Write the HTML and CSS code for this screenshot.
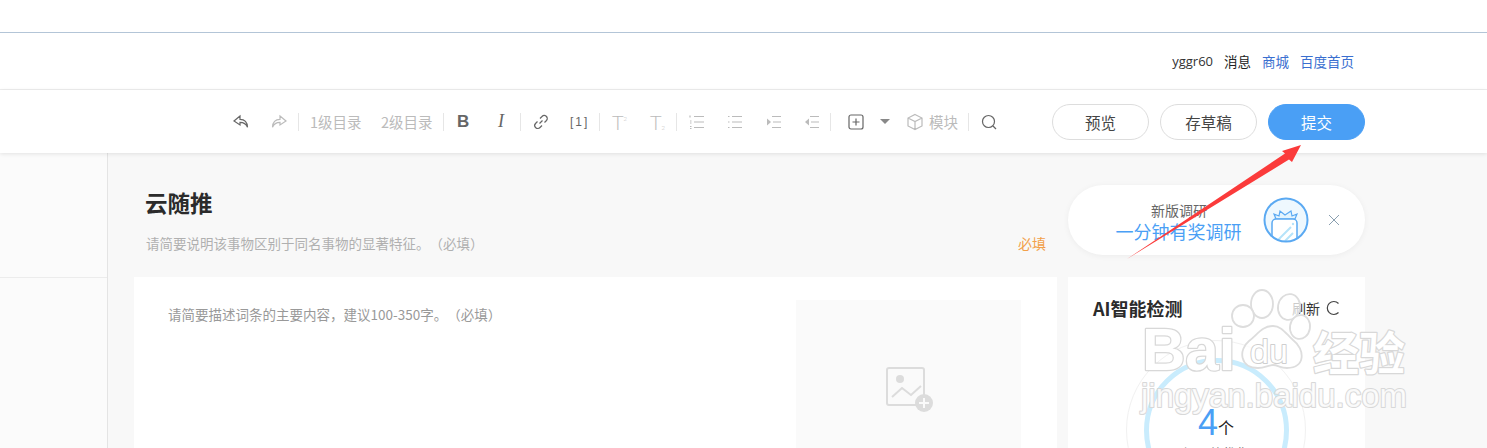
FILE: index.html
```html
<!DOCTYPE html>
<html lang="zh-CN">
<head>
    <meta charset="UTF-8">
    <title>云随推</title>
    <link rel="stylesheet" href="styles.css">
</head>
<body>
    <div class="topstrip"></div>

    <!-- Header -->
    <div class="userbar">
        <span class="user">yggr60</span>
        <span class="msg">消息</span>
        <a class="link">商城</a>
        <a class="link">百度首页</a>
    </div>

    <!-- Toolbar -->
    <div class="toolbar">
        <div class="tools">
            <svg class="ico ico-undo" viewBox="0 0 18 18"><path d="M8 3 2 8l6 4V9.300c3.500 0 6 1.200 7.500 5-.2-5-3-8-7.500-8z"/></svg>
            <svg class="ico ico-redo off" viewBox="0 0 18 18"><path d="M10 3l6 5-6 4V9.300c-3.500 0-6 1.200-7.500 5 .2-5 3-8 7.500-8z"/></svg>
            <i class="sep sep-a"></i>
            <span class="tool-text t1">1级目录</span>
            <span class="tool-text t2">2级目录</span>
            <i class="sep sep-b"></i>
            <span class="bold">B</span>
            <span class="ital">I</span>
            <i class="sep sep-c"></i>
            <svg class="ico ico-link" viewBox="0 0 18 18"><path d="M7.500 10.500 10.500 7.500M8 5.500l2-2a2.800 2.800 0 0 1 4.500 4l-2 2M10 12.500l-2 2a2.800 2.800 0 0 1-4.500-4l2-2"/></svg>
            <span class="ref">[1]</span>
            <i class="sep sep-d"></i>
            <span class="tee t-sup">T<small>2</small></span>
            <span class="tee t-sub">T<small>2</small></span>
            <i class="sep sep-e"></i>
            <svg class="ico ico-ol off" viewBox="0 0 18 18"><path d="M6 3.500h10M6 9h10M6 14.500h10M2 2.500v2M2 8h1.500M2 10h1.500M2 13.500h1.500M2 15.500h1.500"/></svg>
            <svg class="ico ico-ul off" viewBox="0 0 18 18"><path d="M6 3.500h10M6 9h10M6 14.500h10M2 3.500h1.500M2 9h1.500M2 14.500h1.500"/></svg>
            <svg class="ico ico-in off" viewBox="0 0 18 18"><path d="M7 3.500h9M8 9h8M7 14.500h9"/><path class="fill" d="M2 5.500 6 9l-4 3.500z"/></svg>
            <svg class="ico ico-out off" viewBox="0 0 18 18"><path d="M7 3.500h9M8 9h8M7 14.500h9"/><path class="fill" d="M6 5.500 2 9l4 3.500z"/></svg>
            <i class="sep sep-f"></i>
            <svg class="ico ico-add" viewBox="0 0 18 18"><rect x="2" y="2" width="14" height="14" rx="2"/><path d="M9 5.500v7M5.500 9h7"/></svg>
            <i class="caret"></i>
            <svg class="ico ico-cube off" viewBox="0 0 18 18"><path d="M9 1.500 16 5v8l-7 3.500L2 13V5zM2 5l7 3.500L16 5M9 8.500v8"/></svg>
            <span class="tool-text t3">模块</span>
            <i class="sep sep-g"></i>
            <svg class="ico ico-search" viewBox="0 0 18 18"><circle cx="8.500" cy="8.500" r="6"/><path d="m13 13 3 3"/></svg>
        </div>
        <div class="actions">
            <button class="btn">预览</button>
            <button class="btn">存草稿</button>
            <button class="btn primary">提交</button>
        </div>
    </div>

    <!-- Body -->
    <div class="page">
        <div class="sidebar"><div class="side-top"></div></div>
        <div class="content">
            <div class="col-main">
                <div class="heading">
                    <h1 class="title">云随推</h1>
                    <div class="sub-row">
                        <span class="subtitle">请简要说明该事物区别于同名事物的显著特征。（必填）</span>
                        <span class="required">必填</span>
                    </div>
                </div>
                <div class="editor">
                    <p class="hint">请简要描述词条的主要内容，建议100-350字。（必填）</p>
                    <div class="pic">
                        <svg class="pic-ico" viewBox="0 0 48 46">
                            <rect x="2" y="2" width="37" height="37" rx="2" fill="none" stroke="#dcdcdc" stroke-width="2"/>
                            <circle cx="15" cy="13" r="4" fill="#dcdcdc"/>
                            <path d="M7 31l10-9 9 7 10-9" fill="none" stroke="#dcdcdc" stroke-width="2"/>
                            <circle cx="39" cy="37" r="9" fill="#dcdcdc"/>
                            <path d="M39 32v10M34 37h10" stroke="#fafafa" stroke-width="2"/>
                        </svg>
                    </div>
                </div>
            </div>
            <div class="col-side">
                <div class="survey">
                    <div class="survey-text">
                        <span class="survey-small">新版调研</span>
                        <span class="survey-big">一分钟有奖调研</span>
                    </div>
                    <svg class="gift" viewBox="0 0 46 46">
                        <clipPath id="gift-clip"><circle cx="23" cy="23" r="21"/></clipPath>
                        <circle cx="23" cy="23" r="21.500" fill="#eef8fe"/>
                        <g clip-path="url(#gift-clip)">
                            <path d="M13 22l-2-5 5 2 1-5 5 4 6-4 1 5 5-2-2 5z" fill="#e3f4fd" stroke="#5aa9f2" stroke-width="1.200"/>
                            <rect x="9" y="22" width="25" height="26" rx="4" fill="#fff" stroke="#5aa9f2" stroke-width="1.500"/>
                            <path d="M14 44l14-14M22 44l8-8" stroke="#b5e3fa" stroke-width="2"/>
                            <circle cx="30" cy="27" r="1.200" fill="#b5e3fa"/>
                        </g>
                        <circle cx="23" cy="23" r="21.500" fill="none" stroke="#5aa9f2" stroke-width="2"/>
                    </svg>
                    <svg class="close" viewBox="0 0 12 12"><path d="M1 1l10 10M11 1 1 11"/></svg>
                </div>
                <div class="ai-card">
                    <div class="ai-head">
                        <span class="ai-title">AI智能检测</span>
                        <span class="refresh">刷新
                            <svg class="refresh-ico" viewBox="0 0 16 16"><path d="M13.500 3.500a6.500 6.500 0 1 0 0 9"/></svg>
                        </span>
                    </div>
                    <div class="gauge">
                        <div class="ring">
                            <div class="score"><b>4</b><span>个</span></div>
                            <div class="score-label">问题待优化</div>
                        </div>
                    </div>
                </div>
            </div>
        </div>
    </div>

    <!-- Watermark -->
    <svg class="watermark" viewBox="0 0 360 170">
        <g class="wm-paw">
            <ellipse cx="119" cy="16" rx="11" ry="14"/>
            <ellipse cx="146" cy="19" rx="11" ry="13" transform="rotate(10 146 19)"/>
            <ellipse cx="100" cy="28" rx="11" ry="11"/>
            <ellipse cx="157" cy="39" rx="10" ry="12" transform="rotate(10 157 39)"/>
            <path d="M130 38c9 0 13 8 20 14 12 9 13 28-6 28-7 0-9-3-14-3s-8 3-15 3c-18 0-20-18-9-27 9-7 13-15 24-15z"/>
        </g>
        <text class="wm-big" x="-1" y="82">Bai</text>
        <text class="wm-du" x="107" y="75">du</text>
        <text class="wm-cn" x="170" y="82">经验</text>
        <text class="wm-url" x="-2" y="119">jingyan.baidu.com</text>
    </svg>

    <!-- Freccia -->
    <svg class="arrow" viewBox="0 0 190 125"><path d="M2 116 160 10.500 157 8l19-6-9 17-3-2.500z" fill="#fb3b3b"/></svg>
</body>
</html>
```

FILE: styles.css
```css
* { margin: 0; padding: 0; box-sizing: border-box; }

html, body {
    height: 448px;
    overflow: hidden;
}

body {
    position: relative;
    background: #f8f8f8;
    font-family: "Noto Sans CJK SC", "Liberation Sans", sans-serif;
    font-size: 14px;
    color: #333;
    text-spacing-trim: space-all;
}

/* Header */
.topstrip {
    height: 33px;
    background: #fff;
    border-bottom: 1px solid #b3c5d7;
}

.userbar {
    height: 57px;
    background: #fff;
    border-bottom: 1px solid #eee;
    display: flex;
    align-items: center;
    justify-content: flex-end;
    padding: 0 133px 0 0;
    font-size: 13.500px;
    line-height: 18px;
}

.user { font-family: "Open Sans", sans-serif; font-size: 13px; margin-right: 11px; }
.msg { margin-right: 11px; color: #222; }
.link { color: #3a6fd0; margin-right: 11px; }
.link:last-child { margin-right: 0; }

/* Toolbar */
.toolbar {
    height: 63px;
    background: #fff;
    box-shadow: 0 1px 4px rgba(0, 0, 0, .1);
    position: relative;
    display: flex;
    align-items: center;
    padding: 0 122px 0 232px;
}

.tools {
    display: flex;
    align-items: center;
    flex: 1;
    height: 20px;
    color: #bbb;
}

.ico {
    width: 18px;
    height: 18px;
    flex: none;
    fill: none;
    stroke: #666;
    stroke-width: 1.200;
}

.ico.off { stroke: #bbb; }
.ico .fill { fill: #bbb; stroke: none; }

.sep {
    width: 1px;
    height: 18px;
    background: #e6e6e6;
    flex: none;
}

.tool-text { font-size: 14.500px; line-height: 20px; color: #bbb; white-space: nowrap; }

.ico-redo { margin-left: 20px; }
.sep-a { margin-left: 10px; }
.t1 { margin-left: 11px; width: 52px; }
.t2 { margin-left: 19px; width: 53px; }
.sep-b { margin-left: 9px; }

.bold { margin-left: 13px; width: 14px; font: bold 17px "Liberation Sans", sans-serif; color: #666; }
.ital { margin-left: 24px; width: 12px; font: italic 18px "Liberation Serif", serif; color: #666; text-align: center; }
.sep-c { margin-left: 13px; }
.ico-link { margin-left: 11px; }
.ref { margin-left: 20px; width: 18px; font: 12px "Liberation Sans", sans-serif; color: #666; letter-spacing: 2px; white-space: nowrap; }
.sep-d { margin-left: 11px; }

.tee { font: 300 20px/20px Lato, sans-serif; color: #bbb; width: 18px; white-space: nowrap; }
.tee small { font-size: 6px; line-height: 0; position: relative; }
.t-sup { margin-left: 12px; }
.t-sup small { top: -9px; }
.t-sub { margin-left: 20px; }
.sep-e { margin-left: 8px; }

.ico-ol { margin-left: 11px; }
.ico-ul { margin-left: 20px; }
.ico-in { margin-left: 21px; }
.ico-out { margin-left: 20px; }
.sep-f { margin-left: 9px; }

.ico-add { margin-left: 16px; }
.caret {
    margin-left: 15px;
    width: 0;
    height: 0;
    border: 5px solid transparent;
    border-top: 5px solid #888;
    border-bottom: 0;
    flex: none;
}
.ico-cube { margin-left: 16px; }
.t3 { margin-left: 5px; width: 30px; }
.sep-g { margin-left: 9px; }
.ico-search { margin-left: 11px; }

.actions { display: flex; gap: 11px; }

.btn {
    width: 97px;
    height: 36px;
    border: 1px solid #ddd;
    border-radius: 18px;
    background: #fff;
    font: 15.500px "Noto Sans CJK SC", sans-serif;
    color: #444;
}

.btn.primary {
    background: #4a9ff5;
    border-color: #4a9ff5;
    color: #fff;
}

/* Body */
.page {
    display: flex;
    height: 295px;
}

.sidebar {
    width: 108px;
    flex: none;
    background: #fbfbfb;
    border-right: 1px solid #e4e4e4;
}

.side-top {
    height: 125px;
    border-bottom: 1px solid #ececec;
}

.content {
    flex: 1;
    display: flex;
    gap: 11px;
    padding: 32px 122px 0 26px;
}

.col-main { width: 923px; flex: none; }
.col-side { width: 297px; flex: none; }

.heading { height: 92px; padding: 1px 11px 0 11px; }

.title {
    font-size: 22.500px;
    line-height: 32px;
    font-weight: 700;
    color: #2b2b2b;
}

.sub-row {
    display: flex;
    justify-content: space-between;
    margin-top: 16px;
    font-size: 13.500px;
    line-height: 18px;
}

.subtitle { color: #b0b0b0; margin-left: 1px; }
.required { color: #f2a04a; font-size: 14px; }

.editor {
    height: 180px;
    background: #fff;
    display: flex;
    justify-content: space-between;
    padding: 23px 36px 0 34px;
}

.hint { font-size: 13.500px; line-height: 18px; color: #999; margin-top: 5px; }

.pic {
    width: 225px;
    height: 160px;
    background: #fafafa;
    display: flex;
    justify-content: center;
    padding-top: 66px;
}

.pic-ico { width: 48px; height: 46px; }

/* Right column */
.survey {
    height: 70px;
    background: #fff;
    border-radius: 35px;
    box-shadow: 0 1px 6px rgba(0, 0, 0, .05);
    display: flex;
    align-items: center;
    padding-left: 47px;
}

.survey-text {
    width: 148px;
    display: flex;
    flex-direction: column;
    align-items: center;
    margin-top: 4px;
}

.survey-small { font-size: 14px; line-height: 18px; color: #666; margin-right: 20px; }
.survey-big { font-size: 18px; line-height: 24px; color: #4a9ff5; white-space: nowrap; margin-right: 21px; }

.gift { width: 46px; height: 46px; flex: none; }

.close {
    width: 12px;
    height: 12px;
    margin-left: 19px;
    fill: none;
    stroke: #8a9fb0;
    stroke-width: 1;
}

.ai-card {
    margin-top: 22px;
    height: 180px;
    background: #fff;
    padding: 18px 24px 0 25px;
    overflow: hidden;
}

.ai-head {
    display: flex;
    justify-content: space-between;
    align-items: center;
    height: 26px;
}

.ai-title { font-size: 18px; font-weight: 700; color: #2b2b2b; }

.refresh { display: flex; align-items: center; gap: 5px; font-size: 14px; color: #333; }
.refresh-ico { width: 16px; height: 16px; fill: none; stroke: #444; stroke-width: 1.200; }

.gauge {
    width: 180px;
    height: 180px;
    margin: 19px 0 0 33px;
    border: 1px solid #f1f1f1;
    border-radius: 50%;
    display: flex;
    align-items: center;
    justify-content: center;
}

.ring {
    width: 145px;
    height: 145px;
    flex: none;
    border: 5px solid #c9ecfd;
    border-radius: 50%;
    text-align: center;
    padding-top: 43px;
}

.score { display: flex; justify-content: center; align-items: flex-end; line-height: 34px; }
.score b { font: 36px "Liberation Sans", sans-serif; color: #4a9ff5; line-height: 34px; }
.score span { font-size: 16px; line-height: 26px; color: #222; }
.score-label { font-size: 13px; line-height: 20px; color: #666; margin-top: 3px; }

/* Watermark */
.watermark {
    position: absolute;
    left: 1143px;
    top: 288px;
    width: 360px;
    height: 170px;
    overflow: visible;
}

.watermark text { paint-order: stroke; stroke-linejoin: round; }

.wm-paw ellipse, .wm-paw path { fill: rgba(255, 255, 255, .75); stroke: #ddd; stroke-width: 1.800; }
.wm-big { font: bold 60px "Liberation Sans", sans-serif; fill: #fff; stroke: #d8d8d8; stroke-width: 2.500; }
.wm-du { font: 34px "Liberation Sans", sans-serif; fill: #fff; stroke: #cfcfcf; stroke-width: 2; }
.wm-cn { font: bold 46px "Noto Sans CJK SC", sans-serif; fill: #fff; stroke: #d8d8d8; stroke-width: 2.500; }
.wm-url { font: 33px "Liberation Sans", sans-serif; fill: rgba(255, 255, 255, .85); stroke: #d8d8d8; stroke-width: 2; }

/* Freccia */
.arrow {
    position: absolute;
    left: 1125px;
    top: 143px;
    width: 190px;
    height: 125px;
}
```
